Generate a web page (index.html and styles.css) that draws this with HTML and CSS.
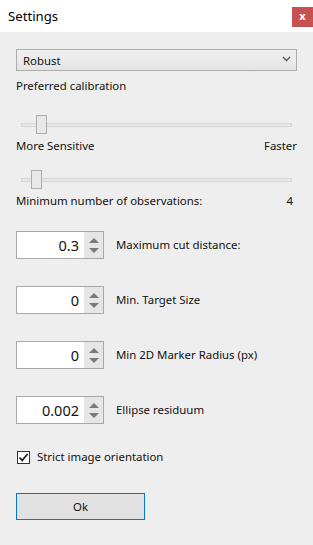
FILE: index.html
```html
<!DOCTYPE html>
<html>
<head>
    <link rel="stylesheet" href="styles.css">
</head>
<body>
    <div class="titlebar">
        <span class="title">Settings</span>
        <span class="close">x</span>
    </div>
    <div class="content">
        <div class="combo">
            <span>Robust</span>
            <svg class="chevron" width="9" height="6" viewBox="0 0 9 6"><path d="M1 1 L4.5 4.5 L8 1" fill="none" stroke="#555" stroke-width="1.4"/></svg>
        </div>
        <div class="label first">Preferred calibration</div>

        <div class="slider s1">
            <div class="track"></div>
            <div class="thumb" style="left: 15px"></div>
        </div>
        <div class="label split"><span>More Sensitive</span><span>Faster</span></div>

        <div class="slider s2">
            <div class="track"></div>
            <div class="thumb" style="left: 10px"></div>
        </div>
        <div class="label split"><span>Minimum number of observations:</span><span class="val">4</span></div>

        <div class="spins">
            <div class="spin-row">
                <div class="spin"><div class="spin-val">0.3</div><div class="spin-btn"><i class="up"></i><i class="down"></i></div></div>
                <span class="label">Maximum cut distance:</span>
            </div>
            <div class="spin-row">
                <div class="spin"><div class="spin-val">0</div><div class="spin-btn"><i class="up"></i><i class="down"></i></div></div>
                <span class="label">Min. Target Size</span>
            </div>
            <div class="spin-row">
                <div class="spin"><div class="spin-val">0</div><div class="spin-btn"><i class="up"></i><i class="down"></i></div></div>
                <span class="label">Min 2D Marker Radius (px)</span>
            </div>
            <div class="spin-row">
                <div class="spin"><div class="spin-val">0.002</div><div class="spin-btn"><i class="up"></i><i class="down"></i></div></div>
                <span class="label">Ellipse residuum</span>
            </div>
        </div>

        <div class="check-row">
            <span class="checkbox">
                <svg width="11" height="11" viewBox="0 0 11 11"><path d="M1.5 5.5 L4.2 8.3 L9.6 2" fill="none" stroke="#222" stroke-width="1.8"/></svg>
            </span>
            <span class="label">Strict image orientation</span>
        </div>

        <div class="ok">Ok</div>
    </div>
</body>
</html>
```

FILE: styles.css
```css
body {
    margin: 0;
    background: #eeeeee;
    font-family: "Noto Sans", sans-serif;
    font-size: 11.4px;
    color: #111;
}
.titlebar {
    height: 32px;
    background: #fff;
    display: flex;
    justify-content: space-between;
    align-items: flex-start;
}
.title {
    font-size: 13.2px;
    margin: 7px 0 0 8px;
    color: #000;
}
.close {
    margin-top: 7px;
    width: 21px;
    height: 20px;
    background: #c75050;
    color: #fff;
    font-weight: bold;
    font-size: 11px;
    line-height: 18px;
    text-align: center;
}
.content {
    padding: 17px 16px 0 16px;
}
.combo {
    height: 22px;
    box-sizing: border-box;
    border: 1px solid #acacac;
    background: linear-gradient(#f0f0f0, #e5e5e5);
    display: flex;
    align-items: center;
    justify-content: space-between;
    padding: 0 5px 0 6px;
}
.chevron {
    margin-bottom: 2px;
}
.label {
    line-height: 16px;
}
.label.first {
    margin-top: 7px;
}
.split {
    display: flex;
    justify-content: space-between;
}
.val {
    padding-right: 4px;
}
.slider {
    position: relative;
    height: 20px;
    margin: 0 5px 0 5px;
}
.s1 {
    margin-top: 21px;
    margin-bottom: 3px;
}
.s2 {
    margin-top: 16px;
    margin-bottom: 3px;
}
.track {
    position: absolute;
    left: 0;
    right: 0;
    top: 8px;
    height: 4px;
    box-sizing: border-box;
    background: #e7e7e7;
    border: 1px solid #d6d6d6;
}
.thumb {
    position: absolute;
    top: 0;
    width: 11px;
    height: 19px;
    box-sizing: border-box;
    background: #e8e8e8;
    border: 1px solid #acacac;
}
.spins {
    margin-top: 22px;
    display: flex;
    flex-direction: column;
    gap: 27px;
}
.spin-row {
    display: flex;
    align-items: center;
    gap: 12px;
}
.spin {
    width: 88px;
    height: 28px;
    box-sizing: border-box;
    border: 1px solid #a8a8a8;
    background: #fff;
    display: flex;
}
.spin-val {
    flex: 1;
    text-align: right;
    font-size: 14.5px;
    line-height: 26px;
    padding-right: 5px;
}
.spin-btn {
    width: 19px;
    background: #e6e6e6;
    display: flex;
    flex-direction: column;
    align-items: center;
    justify-content: center;
    gap: 5px;
}
.spin-btn i {
    width: 0;
    height: 0;
    border-left: 5px solid transparent;
    border-right: 5px solid transparent;
}
.spin-btn .up {
    border-bottom: 5px solid #7a7a7a;
}
.spin-btn .down {
    border-top: 5px solid #7a7a7a;
}
.check-row {
    margin-top: 25px;
    display: flex;
    align-items: center;
    gap: 7px;
    padding-left: 1px;
}
.checkbox {
    width: 13px;
    height: 13px;
    box-sizing: border-box;
    border: 1px solid #333;
    background: #fff;
    display: flex;
    align-items: center;
    justify-content: center;
}
.ok {
    margin-top: 28px;
    width: 129px;
    height: 27px;
    box-sizing: border-box;
    border: 1px solid #0078d7;
    background: #e1e1e1;
    text-align: center;
    line-height: 25px;
}
```
